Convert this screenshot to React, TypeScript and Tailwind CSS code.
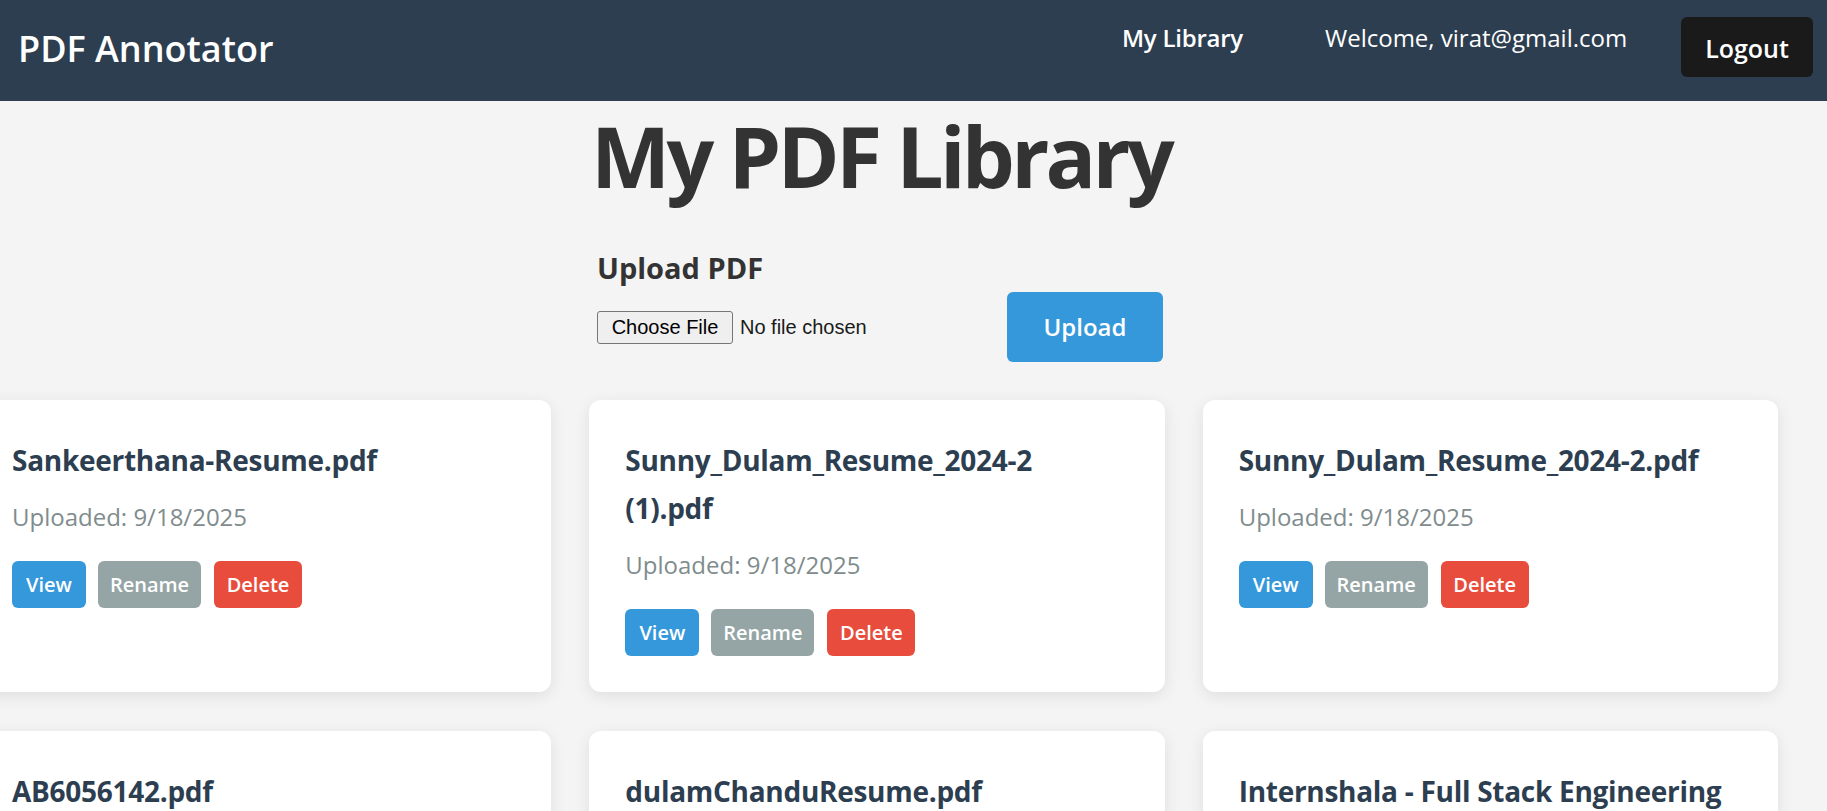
import React from "react";

const files = [
  "Sankeerthana-Resume.pdf",
  "Sunny_Dulam_Resume_2024-2 (1).pdf",
  "Sunny_Dulam_Resume_2024-2.pdf",
  "AB6056142.pdf",
  "dulamChanduResume.pdf",
  "Internshala - Full Stack Engineering Intern.pdf",
];

function Card({ name }: { name: string }) {
  return (
    <div className="rounded-[12px] bg-white p-[36px] shadow-[0_4px_16px_rgba(0,0,0,0.09)]">
      <h3 className="max-w-[492px] text-[28px] font-bold leading-[48px] tracking-[-0.01em] text-[#2c3e50] break-words">{name}</h3>
      <p className="mt-[17px] text-[24px] leading-[32px] text-[#7f8c8d]">Uploaded: 9/18/2025</p>
      <div className="mt-[28px] flex gap-[12px]">
        <button className="flex h-[47px] w-[74px] items-center justify-center rounded-[6px] bg-[#3498db] text-[20px] font-semibold text-white">
          View
        </button>
        <button className="flex h-[47px] w-[103px] items-center justify-center rounded-[6px] bg-[#95a5a6] text-[20px] font-semibold text-white">
          Rename
        </button>
        <button className="ml-[1px] flex h-[47px] w-[88px] items-center justify-center rounded-[6px] bg-[#e74c3c] text-[20px] font-semibold text-white">
          Delete
        </button>
      </div>
    </div>
  );
}

export default function App() {
  return (
    <div className="h-[811px] w-full overflow-hidden bg-[#f4f4f4] font-['Open_Sans',sans-serif]">
      <nav className="flex h-[101px] items-start justify-between bg-[#2c3e50] pl-[18px] pr-[14px] text-white">
        <div className="mt-[31px] text-[36px] font-semibold leading-none">PDF Annotator</div>
        <div className="flex items-start">
          <a className="mt-[26px] w-[121px] whitespace-nowrap text-[24px] font-semibold leading-none tracking-[-0.01em]">My Library</a>
          <span className="ml-[82px] mt-[26px] w-[300px] whitespace-nowrap text-[24px] leading-none">
            Welcome, virat@gmail.com
          </span>
          <button className="ml-[56px] mt-[17px] flex h-[60px] w-[132px] items-center justify-center rounded-[6px] bg-[#1a1a1a] pt-[2px] text-[25px] font-semibold leading-none text-white">
            Logout
          </button>
        </div>
      </nav>

      <main className="ml-[-24px] w-[1802px]">
        <h1 className="mt-[13px] pl-[8px] text-center text-[84px] font-bold leading-none tracking-[-0.045em] text-[#333]">My PDF Library</h1>

        <div className="flex justify-center pl-[6px]">
          <div className="w-[566px]">
            <h3 className="mt-[55px] text-[29px] font-bold leading-none text-[#333]">Upload PDF</h3>
            <div className="mt-[10px] flex h-[70px] items-center justify-between">
              <div className="flex items-center font-['Liberation_Sans',Arial,sans-serif] text-[20px] text-[#1a1a1a]">
                <span className="flex h-[33px] w-[136px] items-center justify-center rounded-[3px] border border-[#767676] bg-[#efefef] text-black">
                  Choose File
                </span>
                <span className="ml-[7px]">No file chosen</span>
              </div>
              <button className="flex h-[70px] w-[156px] items-center justify-center rounded-[6px] bg-[#3498db] text-[24px] font-semibold text-white">
                Upload
              </button>
            </div>
          </div>
        </div>

        <div className="mt-[38px] grid grid-cols-3 gap-x-[38px] gap-y-[39px]">
          {files.map((f) => (
            <Card key={f} name={f} />
          ))}
        </div>
      </main>
    </div>
  );
}
